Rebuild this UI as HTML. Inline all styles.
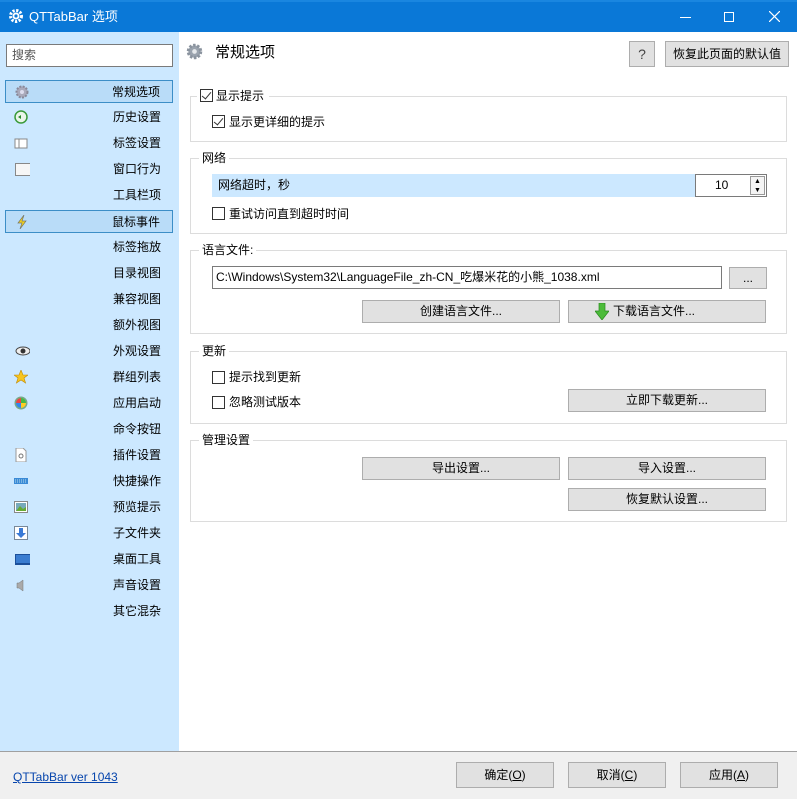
<!DOCTYPE html>
<html><head><meta charset="utf-8"><style>
*{box-sizing:border-box;margin:0;padding:0}
body{width:797px;height:799px;position:relative;overflow:hidden;background:#fff;font-family:"Liberation Sans","Noto Sans CJK SC",sans-serif;font-size:12px;color:#000}
.a{position:absolute}
.title{left:0;top:0;width:797px;height:32px;background:#0a78d7;border-top:2px solid #1a86e0;color:#fff}
.side{left:0;top:32px;width:179px;height:719px;background:#cce8ff}
.nav{position:absolute;left:5px;width:168px;height:23px;text-align:right;padding-right:12px;line-height:22px;font-size:12px}
.sel{background:#b9dcf8;border:1px solid #3c8ec7}
.ic{position:absolute;left:9px;top:4px;width:14px;height:14px}
.grp{position:absolute;left:190px;width:597px;border:1px solid #dcdcdc}
.lg{position:absolute;left:8px;top:-9px;background:#fff;padding:0 3px;line-height:16px}
.btn{position:absolute;background:#e1e1e1;border:1px solid #adadad;text-align:center;line-height:20px}
.cb{position:absolute;width:13px;height:13px;border:1px solid #333;background:#fff}
.cb.on::after{content:"";position:absolute;left:3px;top:0px;width:4px;height:8px;border:solid #333;border-width:0 1.5px 1.5px 0;transform:rotate(40deg)}
.t{position:absolute;line-height:14px;white-space:nowrap}
</style></head><body>
<div class="a title">
<svg class="a" style="left:8px;top:6px" width="16" height="16" viewBox="0 0 16 16"><circle cx="8" cy="8" r="5.5" fill="none" stroke="#fff" stroke-width="3" stroke-dasharray="2.2 1.5"/><circle cx="8" cy="8" r="3.5" fill="#fff"/><circle cx="8" cy="8" r="1.6" fill="#0a78d7"/></svg>
<div class="t" style="left:29px;top:8px;font-size:13px">QTTabBar 选项</div>
<div class="a" style="left:680px;top:15px;width:11px;height:1px;background:#fff"></div>
<div class="a" style="left:724px;top:10px;width:10px;height:10px;border:1px solid #fff"></div>
<svg class="a" style="left:769px;top:9px" width="11" height="11" viewBox="0 0 11 11"><path d="M0 0L11 11M11 0L0 11" stroke="#fff" stroke-width="1.2"/></svg>
</div>
<div class="a side">
<div class="a" style="left:6px;top:12px;width:167px;height:23px;background:#fff;border:1px solid #7a7a7a;padding-left:5px;line-height:20px;color:#555">搜索</div>
</div>
<div class="nav sel" style="top:80px"><svg class="ic" viewBox="0 0 14 14"><circle cx="7" cy="7" r="5.5" fill="#aab" stroke="#889" stroke-dasharray="2 1.3" stroke-width="2"/><circle cx="7" cy="7" r="2" fill="#dde"/></svg>常规选项</div>
<div class="nav" style="top:106px"><svg class="ic" viewBox="0 0 14 14"><circle cx="7" cy="7" r="6" fill="#e9f5e9" stroke="#3a9a3a" stroke-width="1.5"/><path d="M4 7l3-2v4z" fill="#2a8a2a"/></svg>历史设置</div>
<div class="nav" style="top:132px"><svg class="ic" viewBox="0 0 14 14"><rect x="1" y="3" width="12" height="9" fill="#fff" stroke="#888"/><line x1="5" y1="3" x2="5" y2="12" stroke="#888"/></svg>标签设置</div>
<div class="nav" style="top:158px"><svg class="ic" viewBox="0 0 14 14" style="width:16px"><rect x="0.5" y="1.5" width="15" height="12" fill="#f6f6f6" stroke="#888"/></svg>窗口行为</div>
<div class="nav" style="top:184px">工具栏项</div>
<div class="nav sel" style="top:210px"><svg class="ic" viewBox="0 0 14 14"><path d="M9 0L3 8h4l-2 6 6-8H7z" fill="#f5d31a" stroke="#776" stroke-width=".7"/></svg>鼠标事件</div>
<div class="nav" style="top:236px">标签拖放</div>
<div class="nav" style="top:262px">目录视图</div>
<div class="nav" style="top:288px">兼容视图</div>
<div class="nav" style="top:314px">额外视图</div>
<div class="nav" style="top:340px"><svg class="ic" viewBox="0 0 14 14" style="width:16px"><ellipse cx="8" cy="7" rx="7" ry="4" fill="#eee" stroke="#444"/><circle cx="8" cy="7" r="2.5" fill="#333"/></svg>外观设置</div>
<div class="nav" style="top:366px"><svg class="ic" viewBox="0 0 14 14"><path d="M7 0l2 5h5l-4 3 1.6 5L7 10l-4.6 3L4 8 0 5h5z" fill="#f7c520" stroke="#c08a00" stroke-width=".6"/></svg>群组列表</div>
<div class="nav" style="top:392px"><svg class="ic" viewBox="0 0 14 14"><circle cx="7" cy="7" r="6.5" fill="#7a8"/><path d="M7 2a5 5 0 0 0-5 5h5z" fill="#e44"/><path d="M7 2a5 5 0 0 1 5 5H7z" fill="#4b4"/><path d="M2 7a5 5 0 0 0 5 5V7z" fill="#38e"/><path d="M12 7a5 5 0 0 1-5 5V7z" fill="#fc2"/></svg>应用启动</div>
<div class="nav" style="top:418px">命令按钮</div>
<div class="nav" style="top:444px"><svg class="ic" viewBox="0 0 14 14"><path d="M2 0h7l3 3v11H2z" fill="#fff" stroke="#999"/><circle cx="7" cy="8" r="2" fill="none" stroke="#777"/></svg>插件设置</div>
<div class="nav" style="top:470px"><svg class="ic" viewBox="0 0 14 14"><rect x="0" y="4" width="14" height="6" fill="#3a8ad6"/><path d="M1 6h12M1 8h12" stroke="#bde" stroke-dasharray="1 1"/></svg>快捷操作</div>
<div class="nav" style="top:496px"><svg class="ic" viewBox="0 0 14 14"><rect x=".5" y="1.5" width="13" height="11" fill="#fff" stroke="#888"/><rect x="2" y="3" width="10" height="8" fill="#7ab"/><path d="M2 11l4-5 3 3 3-2v4z" fill="#6a3"/></svg>预览提示</div>
<div class="nav" style="top:522px"><svg class="ic" viewBox="0 0 14 14"><rect x=".5" y=".5" width="13" height="13" fill="#fff" stroke="#789"/><path d="M5 2h4v5h3l-5 5-5-5h3z" fill="#3a7ad6"/></svg>子文件夹</div>
<div class="nav" style="top:548px"><svg class="ic" viewBox="0 0 14 14" style="width:16px"><rect x="0" y="2" width="16" height="11" fill="#1b4f9a"/><rect x="1" y="3" width="14" height="8" fill="#3a7cd0"/></svg>桌面工具</div>
<div class="nav" style="top:574px"><svg class="ic" viewBox="0 0 14 14"><path d="M3 5h2l4-3v11l-4-3H3z" fill="#aaa" stroke="#777" stroke-width=".5"/></svg>声音设置</div>
<div class="nav" style="top:600px">其它混杂</div>

<svg class="a" style="left:186px;top:43px" width="17" height="17" viewBox="0 0 16 16"><circle cx="8" cy="8" r="5.8" fill="#9aa3ae" stroke="#8a939e" stroke-width="3" stroke-dasharray="2.2 1.5"/><circle cx="8" cy="8" r="2.2" fill="#e6e9ec"/></svg>
<div class="t" style="left:215px;top:44px;font-size:15px;line-height:18px">常规选项</div>
<div class="btn" style="left:629px;top:41px;width:26px;height:26px;line-height:24px;font-size:14px;color:#444">?</div>
<div class="btn" style="left:665px;top:41px;width:124px;height:26px;line-height:24px">恢复此页面的默认值</div>

<div class="grp" style="top:96px;height:46px"></div>
<div class="a" style="left:197px;top:88px;width:72px;height:16px;background:#fff"></div>
<div class="cb on" style="left:200px;top:89px"></div><div class="t" style="left:216px;top:89px">显示提示</div>
<div class="cb on" style="left:212px;top:115px"></div><div class="t" style="left:229px;top:115px">显示更详细的提示</div>

<div class="grp" style="top:158px;height:76px"><div class="lg">网络</div></div>
<div class="a" style="left:212px;top:174px;width:484px;height:23px;background:#cce8ff"></div>
<div class="t" style="left:218px;top:178px">网络超时，秒</div>
<div class="a" style="left:695px;top:174px;width:72px;height:23px;border:1px solid #7a7a7a;background:#fff"></div>
<div class="t" style="left:715px;top:178px">10</div>
<div class="a" style="left:750px;top:176px;width:15px;height:19px;border:1px solid #999;background:#f4f4f4;font-size:7px;line-height:9px;text-align:center">▲<br>▼</div>
<div class="cb" style="left:212px;top:207px"></div><div class="t" style="left:229px;top:207px">重试访问直到超时时间</div>

<div class="grp" style="top:250px;height:84px"><div class="lg">语言文件:</div></div>
<div class="a" style="left:212px;top:266px;width:510px;height:23px;border:1px solid #7a7a7a;background:#fff;padding-left:3px;line-height:21px;white-space:nowrap">C:\Windows\System32\LanguageFile_zh-CN_吃爆米花的小熊_1038.xml</div>
<div class="btn" style="left:729px;top:267px;width:38px;height:22px">...</div>
<div class="btn" style="left:362px;top:300px;width:198px;height:23px">创建语言文件...</div>
<div class="btn" style="left:568px;top:300px;width:198px;height:23px"><svg style="position:absolute;left:26px;top:2px" width="14" height="17" viewBox="0 0 14 17"><path d="M4 0h6v8h4l-7 9-7-9h4z" fill="#4cbb3a" stroke="#2a8a20" stroke-width=".7"/></svg><span style="position:absolute;left:44px;top:0">下载语言文件...</span></div>

<div class="grp" style="top:351px;height:73px"><div class="lg">更新</div></div>
<div class="cb" style="left:212px;top:371px"></div><div class="t" style="left:229px;top:370px">提示找到更新</div>
<div class="cb" style="left:212px;top:396px"></div><div class="t" style="left:229px;top:395px">忽略测试版本</div>
<div class="btn" style="left:568px;top:389px;width:198px;height:23px">立即下载更新...</div>

<div class="grp" style="top:440px;height:82px"><div class="lg">管理设置</div></div>
<div class="btn" style="left:362px;top:457px;width:198px;height:23px">导出设置...</div>
<div class="btn" style="left:568px;top:457px;width:198px;height:23px">导入设置...</div>
<div class="btn" style="left:568px;top:488px;width:198px;height:23px">恢复默认设置...</div>

<div class="a" style="left:0;top:751px;width:797px;height:48px;background:#f0f0f0;border-top:1px solid #a0a0a0"></div>
<div class="t" style="left:13px;top:770px;color:#0645ad;text-decoration:underline">QTTabBar ver 1043</div>
<div class="btn" style="left:456px;top:762px;width:98px;height:26px;line-height:24px">确定(<u>O</u>)</div>
<div class="btn" style="left:568px;top:762px;width:98px;height:26px;line-height:24px">取消(<u>C</u>)</div>
<div class="btn" style="left:680px;top:762px;width:98px;height:26px;line-height:24px">应用(<u>A</u>)</div>
</body></html>
